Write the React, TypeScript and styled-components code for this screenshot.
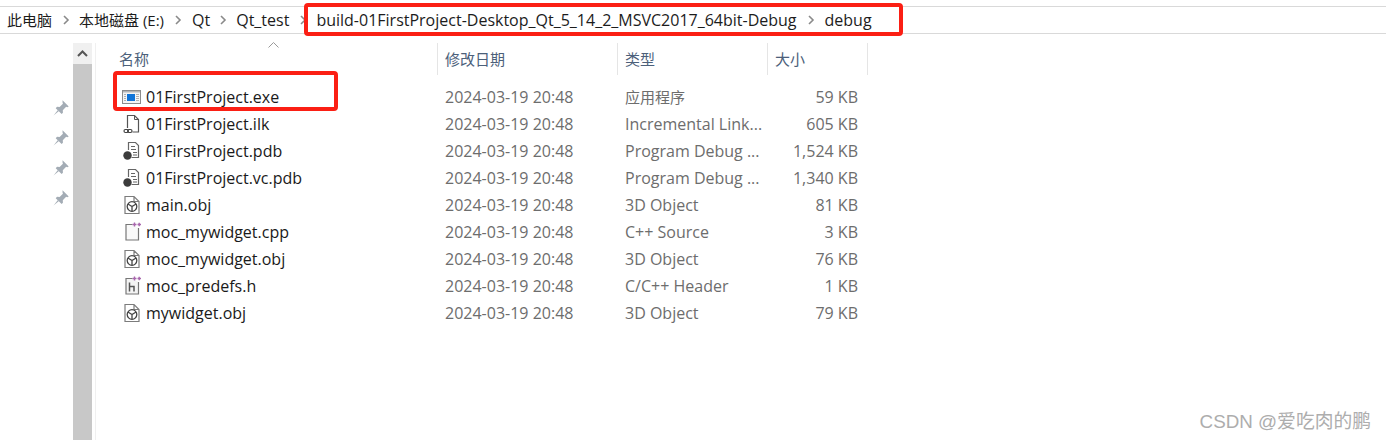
import React from "react";
import styled, { createGlobalStyle } from "styled-components";

const Global = createGlobalStyle`
  html, body { margin: 0; padding: 0; background: #fff; }
  body { font-family: "Open Sans", "Noto Sans CJK SC", "Noto Sans", sans-serif; overflow: hidden; }
`;
const Page = styled.div`
  position: relative; width: 1386px; height: 440px; overflow: hidden; background: #fff;
  display: flex; flex-direction: column; padding-top: 6px; box-sizing: border-box;
`;
const Crumbs = styled.nav`
  height: 28px; box-sizing: border-box; border-top: 1px solid #d9d9d9; border-bottom: 1px solid #d9d9d9;
  display: flex; align-items: center; padding-left: 7px; font-size: 16px; color: #1c1c1c; flex: none;
`;
const Crumb = styled.span<{ $cjk?: boolean }>`
  white-space: nowrap; line-height: 26px; font-size: ${p => (p.$cjk ? 15 : 16)}px;
`;
const Sep = styled.span<{ $w: number }>`
  width: ${p => p.$w}px; display: flex; justify-content: center; flex: none;
`;
const Body = styled.div`flex: 1; display: flex; padding-top: 9px; min-height: 0;`;
const PinColumn = styled.div`
  width: 73px; flex: none; box-sizing: border-box; padding: 56px 0 0 52px;
  display: flex; flex-direction: column; gap: 12px;
`;
const Scrollbar = styled.div`
  width: 19px; flex: none; background: #f0f0f0; display: flex; flex-direction: column;
`;
const ScrollUp = styled.div`height: 21px; display: flex; align-items: center; justify-content: center;`;
const ScrollThumb = styled.div`flex: 1; background: #c8c8c8;`;
const Divider = styled.div`width: 1px; flex: none; margin-left: 3px; background: #f0f0f0;`;
const Listing = styled.div`flex: 1; display: flex; flex-direction: column; position: relative;`;
const HeadRow = styled.div`display: flex; height: 32px; flex: none;`;
const HeadCell = styled.div<{ $w: number; $pad: number }>`
  width: ${p => p.$w}px; box-sizing: border-box; padding-left: ${p => p.$pad}px; flex: none;
  font-size: 15px; color: #4c607a; border-right: 1px solid #e5e5e5; position: relative;
  display: flex; align-items: center; padding-bottom: 1px;
`;
const SortCaret = styled.span`
  position: absolute; left: 172px; top: -1px; line-height: 0;
`;
const Rows = styled.div`margin-top: 8px; display: flex; flex-direction: column;`;
const Row = styled.div`display: flex; height: 27px; align-items: center;`;
const NameCell = styled.div`
  width: 349px; flex: none; display: flex; align-items: center; padding-left: 25px; box-sizing: border-box;
  font-size: 16px; color: #1a1a1a; gap: 4px; white-space: nowrap;
`;
const IconBox = styled.span`width: 21px; height: 20px; flex: none; display: flex; align-items: center; justify-content: center;`;
const DateCell = styled.div`width: 180px; flex: none; font-size: 16px; color: #6d6d6d; white-space: nowrap;`;
const TypeCell = styled.div<{ $cjk: boolean }>`
  width: 142px; flex: none; font-size: ${p => (p.$cjk ? 15 : 16)}px; color: #6d6d6d; white-space: nowrap; overflow: hidden;
`;
const SizeCell = styled.div`width: 91px; flex: none; font-size: 16px; color: #6d6d6d; text-align: right; white-space: nowrap;`;
const RedBox = styled.div<{ $l: number; $t: number; $w: number; $h: number }>`
  position: absolute; left: ${p => p.$l}px; top: ${p => p.$t}px; width: ${p => p.$w}px; height: ${p => p.$h}px;
  box-sizing: border-box; border: 4px solid #fb1f14; border-radius: 4px; pointer-events: none;
`;
const Watermark = styled.div`
  position: absolute; right: 15px; top: 409px; font-size: 18.8px; color: #adadad; white-space: nowrap;
  font-family: "Liberation Sans", "Noto Sans CJK SC", sans-serif; line-height: 26px;
`;

const Chevron = () => (
  <svg width="8" height="10" viewBox="0 0 8 10"><path d="M2 1l4 4-4 4" fill="none" stroke="#8a8a8a" strokeWidth="1.6" /></svg>
);
const Pin = () => (
  <svg width="18" height="18" viewBox="0 0 14 14">
    <path d="M8.200 1l4.800 4.800-1.100.6-.9-.3-2.600 2.600.1 2-1 1L2.900 7.100l1-1 2 .1L8.500 3.600l-.3-.9z" fill="#a3acb5" />
    <path d="M4.600 8.600L1.200 12.800l4.200-3.400z" fill="#a3acb5" />
  </svg>
);
const ExeIcon = () => (
  <svg width="19" height="14" viewBox="0 0 19 14">
    <rect x=".5" y=".5" width="18" height="13" fill="#f4f4f4" stroke="#8c8c8c" />
    <rect x="1" y="1" width="17" height="1.500" fill="#b5b5b5" />
    <rect x="5" y="4" width="8" height="7" fill="#0f74d8" />
    <path d="M2 4.500h2M2 6.500h2M2 8.500h2M2 10.500h2M14 4.500h3M14 6.500h3M14 8.500h3M14 10.500h3" stroke="#b0b0b0" />
  </svg>
);
const IlkIcon = () => (
  <svg width="18" height="20" viewBox="0 0 18 20">
    <path d="M4.500 14V1.500h7l4 4v12.500h-6" fill="#fff" stroke="#555" strokeWidth="1.200" />
    <path d="M11.500 1.500v4h4" fill="none" stroke="#555" />
    <rect x="1" y="15.500" width="4.500" height="3" rx="1.500" fill="none" stroke="#444" strokeWidth="1.200" />
    <rect x="4.500" y="15.500" width="4.500" height="3" rx="1.500" fill="none" stroke="#444" strokeWidth="1.200" />
  </svg>
);
const PdbIcon = () => (
  <svg width="18" height="20" viewBox="0 0 18 20">
    <path d="M5.500 9V1.500h7l3 3v12h-7" fill="#fff" stroke="#666" strokeWidth="1.200" />
    <path d="M8 5.500h4M8 8.500h5M10 11.500h4M10 14h4" stroke="#666" strokeWidth="1.200" fill="none" />
    <circle cx="4.500" cy="14.500" r="4.200" fill="#3c3c3c" />
  </svg>
);
const ObjIcon = () => (
  <svg width="18" height="20" viewBox="0 0 18 20">
    <path d="M2 1.500h9l5 5v12H2z M11 1.500v5h5" fill="#fff" stroke="#7c7c7c" strokeWidth="1.200" />
    <circle cx="9" cy="11.500" r="4.800" fill="none" stroke="#444" strokeWidth="1.300" />
    <path d="M4.900 9L9 11.500 13.100 9M9 11.500v4.800" fill="none" stroke="#444" strokeWidth="1.300" />
  </svg>
);
const Sparks = () => (
  <path d="M9.500 2.500h4M11.500.5v4M14.500 2.500h3.500M16.200.7v3.600" stroke="#a867ad" strokeWidth="1.400" fill="none" />
);
const CppIcon = () => (
  <svg width="18" height="20" viewBox="0 0 18 20">
    <path d="M9.500 2.500H3v15.500h12.500V6" fill="#f9f9f9" stroke="#777" strokeWidth="1.200" />
    <Sparks />
  </svg>
);
const HIcon = () => (
  <svg width="18" height="20" viewBox="0 0 18 20">
    <path d="M9.500 2.500H3v15.500h12.500V6" fill="#f4f4f4" stroke="#777" strokeWidth="1.200" />
    <path d="M6.500 6.500v9M6.500 10.500h4.500v5" fill="none" stroke="#555" strokeWidth="1.500" />
    <Sparks />
  </svg>
);

const files: [React.ReactNode, string, string, string, boolean][] = [
  [<ExeIcon />, "01FirstProject.exe", "应用程序", "59 KB", true],
  [<IlkIcon />, "01FirstProject.ilk", "Incremental Link...", "605 KB", false],
  [<PdbIcon />, "01FirstProject.pdb", "Program Debug ...", "1,524 KB", false],
  [<PdbIcon />, "01FirstProject.vc.pdb", "Program Debug ...", "1,340 KB", false],
  [<ObjIcon />, "main.obj", "3D Object", "81 KB", false],
  [<CppIcon />, "moc_mywidget.cpp", "C++ Source", "3 KB", false],
  [<ObjIcon />, "moc_mywidget.obj", "3D Object", "76 KB", false],
  [<HIcon />, "moc_predefs.h", "C/C++ Header", "1 KB", false],
  [<ObjIcon />, "mywidget.obj", "3D Object", "79 KB", false],
];

export default function App() {
  return (
    <Page>
      <Global />
      <Crumbs>
        <Crumb $cjk>此电脑</Crumb><Sep $w={27}><Chevron /></Sep>
        <Crumb $cjk>本地磁盘 (E:)</Crumb><Sep $w={28}><Chevron /></Sep>
        <Crumb>Qt</Crumb><Sep $w={26}><Chevron /></Sep>
        <Crumb>Qt_test</Crumb><Sep $w={27}><Chevron /></Sep>
        <Crumb>build-01FirstProject-Desktop_Qt_5_14_2_MSVC2017_64bit-Debug</Crumb><Sep $w={28}><Chevron /></Sep>
        <Crumb>debug</Crumb>
      </Crumbs>
      <Body>
        <PinColumn><Pin /><Pin /><Pin /><Pin /></PinColumn>
        <Scrollbar>
          <ScrollUp>
            <svg width="11" height="7" viewBox="0 0 11 7"><path d="M1 6l4.500-4.500L10 6" fill="none" stroke="#555" strokeWidth="2" /></svg>
          </ScrollUp>
          <ScrollThumb />
        </Scrollbar>
        <Divider />
        <Listing>
          <HeadRow>
            <HeadCell $w={342} $pad={23}>
              名称
              <SortCaret><svg width="11" height="6" viewBox="0 0 11 6"><path d="M.5 5.500l5-5 5 5" fill="none" stroke="#9a9a9a" /></svg></SortCaret>
            </HeadCell>
            <HeadCell $w={180} $pad={7}>修改日期</HeadCell>
            <HeadCell $w={150} $pad={7}>类型</HeadCell>
            <HeadCell $w={100} $pad={7}>大小</HeadCell>
          </HeadRow>
          <Rows>
            {files.map(([icon, name, type, size, cjk]) => (
              <Row key={name}>
                <NameCell><IconBox>{icon}</IconBox>{name}</NameCell>
                <DateCell>2024-03-19 20:48</DateCell>
                <TypeCell $cjk={cjk}>{type}</TypeCell>
                <SizeCell>{size}</SizeCell>
              </Row>
            ))}
          </Rows>
        </Listing>
      </Body>
      <RedBox $l={304} $t={3} $w={599} $h={33} />
      <RedBox $l={113} $t={71} $w={225} $h={40} />
      <Watermark>CSDN @爱吃肉的鹏</Watermark>
    </Page>
  );
}
